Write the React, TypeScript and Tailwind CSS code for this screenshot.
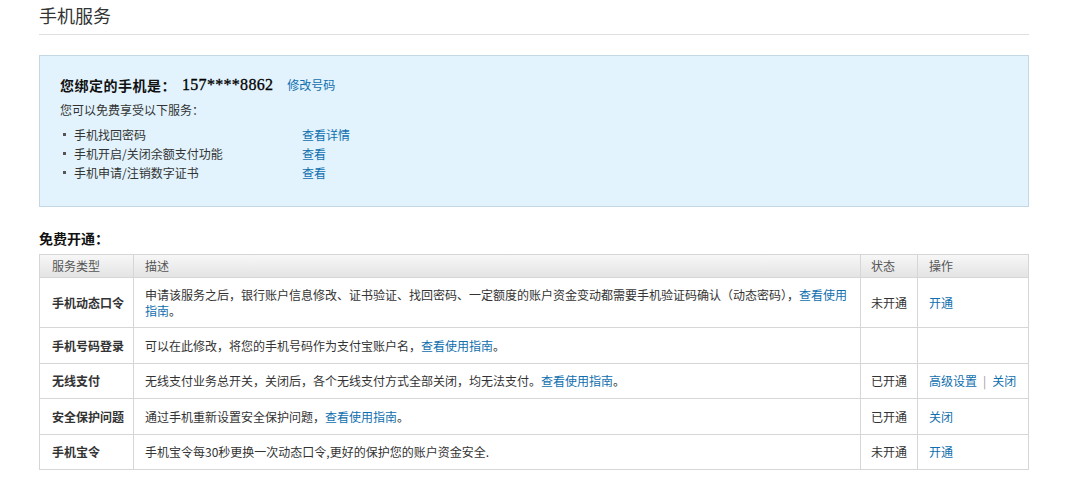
const cjk = "font-['Noto_Sans_CJK_SC','Noto_Sans',sans-serif]";
const link = "text-[#0f6fae] cursor-pointer hover:underline";

type Row = {
	name: string;
	desc: React.ReactNode;
	status: string;
	ops: React.ReactNode;
};

const guide = <a className={link}>查看使用指南</a>;

const rows: Row[] = [
	{
		name: "手机动态口令",
		desc: (
			<>
				申请该服务之后，银行账户信息修改、证书验证、找回密码、一定额度的账户资金变动都需要手机验证码确认（动态密码），
				<a className={link}>查看使用</a>
				<a className={link}>指南</a>。
			</>
		),
		status: "未开通",
		ops: <a className={link}>开通</a>,
	},
	{
		name: "手机号码登录",
		desc: <>可以在此修改，将您的手机号码作为支付宝账户名，{guide}。</>,
		status: "",
		ops: null,
	},
	{
		name: "无线支付",
		desc: <>无线支付业务总开关，关闭后，各个无线支付方式全部关闭，均无法支付。{guide}。</>,
		status: "已开通",
		ops: (
			<>
				<a className={link}>高级设置</a>
				<span className="mx-[6px] text-[#999]">|</span>
				<a className={link}>关闭</a>
			</>
		),
	},
	{
		name: "安全保护问题",
		desc: <>通过手机重新设置安全保护问题，{guide}。</>,
		status: "已开通",
		ops: <a className={link}>关闭</a>,
	},
	{
		name: "手机宝令",
		desc: <>手机宝令每30秒更换一次动态口令,更好的保护您的账户资金安全.</>,
		status: "未开通",
		ops: <a className={link}>开通</a>,
	},
];

const rowHeights = ["h-[50px]", "h-[36px]", "h-[35px]", "h-[36px]", "h-[35px]"];

const services = [
	{ label: "手机找回密码", action: "查看详情" },
	{ label: "手机开启/关闭余额支付功能", action: "查看" },
	{ label: "手机申请/注销数字证书", action: "查看" },
];

export default function App() {
	return (
		<div className={`min-h-screen bg-white text-[12px] text-[#333] ${cjk}`}>
			<div className="w-[990px] ml-[39px] pt-[3px]">
				<h2 className="text-[18px] leading-[24px] text-[#333] pb-[7px] border-b border-[#e0e0e0]">
					手机服务
				</h2>

				<section className="mt-[20px] h-[152px] bg-[#e2f3fd] border border-[#c3d7e4] pl-[20px] pt-[17px]">
					<div className="flex items-center h-[24px]">
						<span className="text-[14px] font-bold text-[#111] tracking-[0.5px]">您绑定的手机是：</span>
						<span className="ml-[6px] text-[16px] tracking-[0.3px] font-['Liberation_Serif',serif] text-[#000] [-webkit-text-stroke:0.3px_#000]">
							157****8862
						</span>
						<a className={`ml-[14px] ${link}`}>修改号码</a>
					</div>
					<p className="mt-[3px] leading-[20px]">您可以免费享受以下服务：</p>
					<ul className="mt-[5px]">
						{services.map((s) => (
							<li key={s.label} className="flex items-center h-[19px]">
								<span className="w-[3px] h-[3px] bg-[#555] ml-[3px] mr-[8px]" />
								<span className="w-[228px]">{s.label}</span>
								<a className={link}>{s.action}</a>
							</li>
						))}
					</ul>
				</section>

				<h3 className="mt-[19px] text-[14px] font-bold text-[#111] leading-[24px]">免费开通：</h3>

				<table className="mt-[4px] w-full border-collapse table-fixed border border-[#d6d6d6]">
					<colgroup>
						<col className="w-[94px]" />
						<col />
						<col className="w-[57px]" />
						<col className="w-[111px]" />
					</colgroup>
					<thead>
						<tr className="h-[23px] bg-gradient-to-b from-[#f7f7f7] to-[#e3e3e3] text-[#555] text-left">
							<th className="font-normal pl-[12px] border border-[#d6d6d6]">服务类型</th>
							<th className="font-normal pl-[11px] border border-[#d6d6d6]">描述</th>
							<th className="font-normal pl-[10px] border border-[#d6d6d6]">状态</th>
							<th className="font-normal pl-[11px] border border-[#d6d6d6]">操作</th>
						</tr>
					</thead>
					<tbody>
						{rows.map((r, i) => (
							<tr key={r.name} className={rowHeights[i]}>
								<td className="pl-[12px] border border-[#d6d6d6] font-bold text-[#333]">{r.name}</td>
								<td className="pl-[11px] pr-[8px] border border-[#d6d6d6] leading-[16px]">{r.desc}</td>
								<td className="pl-[10px] border border-[#d6d6d6]">{r.status}</td>
								<td className="pl-[11px] border border-[#d6d6d6]">{r.ops}</td>
							</tr>
						))}
					</tbody>
				</table>
			</div>
		</div>
	);
}
